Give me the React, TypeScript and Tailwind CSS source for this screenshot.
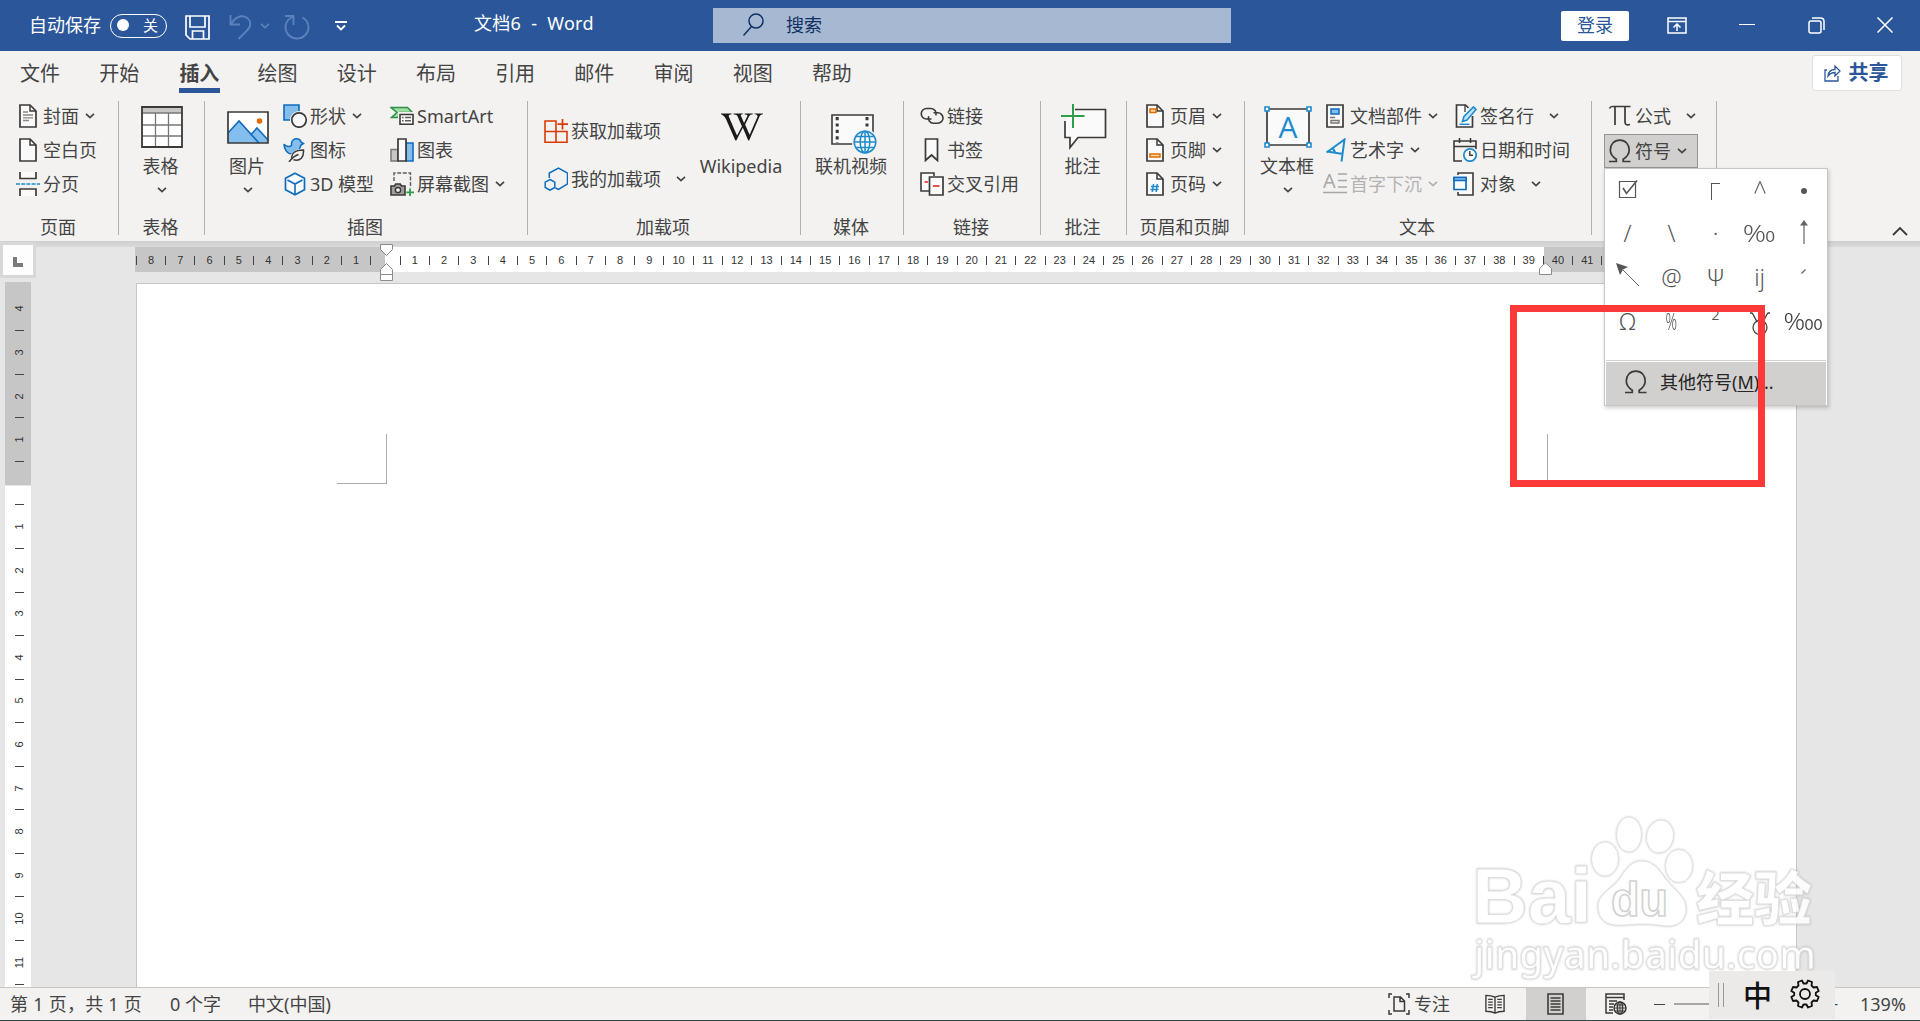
import React from "react";
import { FaWikipediaW } from "react-icons/fa";

const INK = "#3b3a39";
const BLUE = "#1e8bcd";

/* ---------- small building blocks ---------- */

function Chevron({ className = "" }: { className?: string }) {
  return (
    <svg width="10" height="6" viewBox="0 0 10 6" fill="none" stroke="currentColor" strokeWidth="1.7" className={`shrink-0 ${className}`}>
      <path d="M1 .8 5 4.6 9 .8" />
    </svg>
  );
}

function Svg({ children, w = 24, h = 24 }: { children: React.ReactNode; w?: number; h?: number }) {
  return (
    <svg width={w} height={h} viewBox={`0 0 ${w} ${h}`} fill="none" className="shrink-0">
      {children}
    </svg>
  );
}

function Row({ icon, label, chev, muted }: { icon: React.ReactNode; label: string; chev?: "near" | "far"; muted?: boolean }) {
  return (
    <div className={`flex h-[34px] items-center whitespace-nowrap ${muted ? "text-[#b3b1af]" : ""}`}>
      {icon}
      <span className="ml-[3px]">{label}</span>
      {chev && <Chevron className={chev === "near" ? "ml-[6px]" : "ml-[15px]"} />}
    </div>
  );
}

function Big({ icon, label, chev, className = "" }: { icon: React.ReactNode; label: string; chev?: boolean; className?: string }) {
  return (
    <div className={`flex flex-col items-center whitespace-nowrap ${className}`}>
      <div className="flex h-[54px] w-full items-center justify-center pt-0.5">{icon}</div>
      <div className="h-[26px] pr-0.5 leading-[26px]">{label}</div>
      <div className="flex h-[21px] items-center">{chev && <Chevron />}</div>
    </div>
  );
}

function Group({ label, className, children }: { label: string; className: string; children: React.ReactNode }) {
  return (
    <>
      <section className={`flex shrink-0 flex-col pt-1 ${className}`}>
        <div className="flex h-[102px]">{children}</div>
        <div className="mt-[14px] h-6 pr-0.5 text-center leading-6">{label}</div>
      </section>
      <div className="mt-1.5 h-[134px] w-px shrink-0 bg-[#b3b0ad]" />
    </>
  );
}

/* ---------- ribbon icons ---------- */

const Doc = ({ children, x = 4 }: { children?: React.ReactNode; x?: number }) => (
  <Svg>
    <path d={`M${x} 1h10l6 6v16h-16z`} fill="#fafafa" stroke={INK} strokeWidth="1.7" />
    <path d={`M${x + 10} 1v6h6`} stroke={INK} strokeWidth="1.5" />
    {children}
  </Svg>
);

const CoverIcon = () => (
  <Doc>
    <path d="M7 8h5M7 11h10M7 13.8h10M7 16.5h6" stroke="#8a8886" strokeWidth="1.3" />
  </Doc>
);
const BreakIcon = () => (
  <Svg>
    <path d="M4 0v6.5h16V0M4 24v-7h16v7" fill="#fafafa" stroke={INK} strokeWidth="1.7" />
    <path d="M0 12h24" stroke={BLUE} strokeWidth="1.5" strokeDasharray="4 1.2" />
  </Svg>
);
const TableIcon = () => (
  <Svg w={42} h={42}>
    <path d="M1 1h40v40H1z" fill="#fff" />
    <path d="M1 1h40v6H1z" fill="#c8c6c4" />
    <path d="M1 7h40M1 19h40M1 30h40M14.500 7v34M27.500 7v34" stroke="#797775" strokeWidth="1.3" />
    <path d="M1 1h40v40H1z" stroke={INK} strokeWidth="1.8" />
  </Svg>
);
const PictureIcon = () => (
  <Svg w={42} h={33}>
    <path d="M1 1h40v31H1z" fill="#fff" />
    <path d="M1 22 12 10l20 22H1z" fill="#83beec" />
    <path d="m24 23 6-6 11 11v4H32z" fill="#83beec" />
    <path d="M1 22 12 10l20 22M24.500 23l5.500-6 11 12" stroke="#0f6cbd" strokeWidth="1.6" />
    <circle cx="32.500" cy="10" r="2.800" fill="#e06c00" />
    <path d="M1 1h40v31H1z" stroke={INK} strokeWidth="1.7" />
  </Svg>
);
const ShapesIcon = () => (
  <Svg>
    <path d="M1 1h15v15H1z" fill="#83beec" stroke="#0f6cbd" strokeWidth="1.6" />
    <circle cx="16" cy="16" r="9" fill="#f3f2f1" />
    <circle cx="16" cy="16" r="7.200" fill="#fafafa" stroke={INK} strokeWidth="1.700" />
  </Svg>
);
const IconsIcon = () => (
  <Svg>
    <path d="M1 6c1 2 3 2.500 5 2.500 2 0 3-1 2.500-3C8.500 2.500 11 .8 13.500.8 16 .8 17.500 2 18 4l2.500 1.500L18 7c-1 4-4 9-9 9-5 0-8-5-8-10z" fill="#83beec" stroke="#0f6cbd" strokeWidth="1.500" />
    <path d="M5 24c1-8 6-13 17-14 1 8-3 15-11 13z" fill="#f3f2f1" />
    <path d="M9 21.500c-1.500-6 3-9.500 11.500-9.500.5 7-3 11.500-10 9.800M6 24c3-4 6-6.500 9.500-7.500" stroke={INK} strokeWidth="1.500" />
  </Svg>
);
const CubeIcon = () => (
  <Svg>
    <path d="m12 1.200 9.500 5v11.500l-9.500 5-9.500-5V6.200z" fill="#fafafa" stroke="#0f6cbd" strokeWidth="1.700" />
    <path d="m4.500 8 7.500 4 7.500-4M12 12v10" stroke="#0f6cbd" strokeWidth="1.600" />
  </Svg>
);
const SmartArtIcon = () => (
  <Svg>
    <path d="M1 3.500h16.500l5 5H10v5H1.500L7 8.500z" fill="#a1dda4" stroke="#2f8f46" strokeWidth="1.500" />
    <path d="M8 8h16v14H8z" fill="#f3f2f1" />
    <path d="M10 10.500h13v9.800H10z" fill="#fafafa" stroke={INK} strokeWidth="1.600" />
    <path d="M12 13.500h1.600M15 13.500h6M12 16.800h1.600M15 16.800h6" stroke="#605e5c" strokeWidth="1.400" />
  </Svg>
);
const ChartIcon = () => (
  <Svg>
    <path d="M1 11.500h7V23H1z" fill="#c8c6c4" stroke="#797775" strokeWidth="1.500" />
    <path d="M16 5h7v18h-7z" fill="#83beec" stroke="#0f6cbd" strokeWidth="1.600" />
    <path d="M8 1h8v22H8z" fill="#fafafa" stroke={INK} strokeWidth="1.700" />
  </Svg>
);
const ScreenshotIcon = () => (
  <Svg>
    <path d="M4 9V1h16.500v15" stroke="#605e5c" strokeWidth="1.400" strokeDasharray="4 1.600" />
    <path d="M1 14h3.500l1.200-2h4.600l1.200 2H15v9H1z" fill="#a19f9d" stroke={INK} strokeWidth="1.600" />
    <circle cx="8" cy="18" r="2.600" fill="#fafafa" stroke={INK} strokeWidth="1.500" />
    <path d="M20 16.500V24M16.300 20.300H24" stroke="#2f9e4c" strokeWidth="1.800" />
  </Svg>
);
const AddinsIcon = () => (
  <Svg>
    <path d="M1 2h11v10.500H1zM1 12.500h11V23.200H1zM12 12.500h11v10.700H12z" stroke="#d83b01" strokeWidth="1.600" />
    <path d="M18.500 0v10.500M13.500 5.200H24" stroke="#d83b01" strokeWidth="1.700" />
  </Svg>
);
const MyAddinsIcon = () => (
  <Svg>
    <path d="M5.300 11V6L14.500 1l9 5v11l-9 5.500-3-1.500" stroke="#0f6cbd" strokeWidth="1.500" />
    <path d="m6 12.500 4.800 2.700v5.300L6 23.200l-4.800-2.700v-5.300z" stroke="#0f6cbd" strokeWidth="1.500" />
  </Svg>
);
const VideoIcon = () => (
  <Svg w={46} h={40}>
    <path d="M1 1h41v29H1z" fill="#fafafa" stroke={INK} strokeWidth="1.600" />
    <path d="M6.200 3v26" stroke={INK} strokeWidth="3" strokeDasharray="3.200 3.200" />
    <path d="M36 3v12" stroke={INK} strokeWidth="3" strokeDasharray="3.200 3.200" />
    <circle cx="34" cy="28" r="13" fill="#f3f2f1" />
    <g stroke={BLUE} strokeWidth="1.500">
      <circle cx="34" cy="28" r="10.800" fill="#fafafa" />
      <ellipse cx="34" cy="28" rx="4.800" ry="10.800" />
      <path d="M34 17v22M23.200 28h21.600M25 22.500h18M25 33.500h18" />
    </g>
  </Svg>
);
const LinkIcon = () => (
  <Svg>
    <path d="M11.500 15H6.500a5.200 5.200 0 0 1 0-10.500h4.500a5.200 5.200 0 0 1 4.800 7" stroke={INK} strokeWidth="1.600" />
    <path d="M13.500 8.800H17.800a5.200 5.200 0 0 1 0 10.400H13.500a5.200 5.200 0 0 1-4.800-7" stroke={INK} strokeWidth="1.600" />
  </Svg>
);
const BookmarkIcon = () => (
  <Svg>
    <path d="M5.500 1h12v21.500l-6-5.500-6 5.500z" fill="#fafafa" stroke={INK} strokeWidth="1.700" />
  </Svg>
);
const CrossRefIcon = () => (
  <Svg>
    <path d="M9 19H1V1h13v3" fill="#fafafa" stroke={INK} strokeWidth="1.600" />
    <path d="M4.500 10H8" stroke="#e3342f" strokeWidth="1.600" />
    <path d="M9.500 5H23v18H9.500z" fill="#fafafa" stroke={INK} strokeWidth="1.700" />
    <path d="M13 14h6.500" stroke="#e3342f" strokeWidth="1.700" />
  </Svg>
);
const CommentIcon = () => (
  <Svg w={46} h={46}>
    <path d="M14 5.500h30.500v28H17L9 43.500V33.500H4V17" fill="#fafafa" stroke={INK} strokeWidth="1.700" />
    <path d="M12 0v24M0 12h23.500" stroke="#2f9e4c" strokeWidth="2" />
  </Svg>
);
const HeaderIcon = () => (
  <Doc>
    <path d="M7 5h6v3.500H7z" fill="#fbd9a5" stroke="#e06c00" strokeWidth="1.500" />
  </Doc>
);
const FooterIcon = () => (
  <Doc>
    <path d="M7 16h10v3H7z" fill="#fbd9a5" stroke="#e06c00" strokeWidth="1.500" />
  </Doc>
);
const PageNumIcon = () => (
  <Doc>
    <path d="m10.500 12-1.200 8M14.300 12l-1.200 8M8 14.500h8M7.500 17.500h8" stroke={BLUE} strokeWidth="1.500" />
  </Doc>
);
const TextBoxIcon = () => (
  <Svg w={48} h={42}>
    <path d="M3 3h42v36H3z" fill="#fafafa" stroke={INK} strokeWidth="1.700" />
    <g fill="#fff" stroke={BLUE} strokeWidth="1.600">
      <path d="M1 1h4v4H1zM43 1h4v4h-4zM1 37h4v4H1zM43 37h4v4h-4z" />
    </g>
    <text x="24" y="32" textAnchor="middle" fontSize="30" fontFamily="'Open Sans'" fill={BLUE}>A</text>
  </Svg>
);
const PartsIcon = () => (
  <Svg>
    <path d="M4 1h16v22H4z" fill="#fafafa" stroke={INK} strokeWidth="1.700" />
    <path d="M8 5h8v5H8z" fill="#83beec" stroke="#0f6cbd" strokeWidth="1.500" />
    <path d="M7 13.500h5M8 16.500h8v2.500H8z" stroke="#797775" strokeWidth="1.400" />
  </Svg>
);
const WordArtIcon = () => (
  <Svg>
    <path d="M3.500 14.500 21.500 1.500 18.500 23.500M4 13.500 20 16M10 10.500l2.500 4.500" stroke={BLUE} strokeWidth="2" />
  </Svg>
);
const DropCapIcon = () => (
  <Svg>
    <text x="0" y="16" fontSize="20" fontFamily="'Open Sans'" fill="#a8a6a4">A</text>
    <path d="M15 2h9M15 8.500h9M15 15h9M0 20.500h24" stroke="#a8a6a4" strokeWidth="1.500" />
  </Svg>
);
const SignIcon = () => (
  <Svg>
    <path d="M19.500 12v11h-16V1h9l3 3" fill="#fafafa" stroke={INK} strokeWidth="1.700" />
    <path d="M12 1v7" stroke={INK} strokeWidth="1.300" />
    <path d="m9.500 17.500 1.500-5L20.500 3l2.500 2.500L14 16z" fill="#c7e3f7" stroke={BLUE} strokeWidth="1.600" />
    <path d="M6.500 20.300h10" stroke={BLUE} strokeWidth="1.500" />
  </Svg>
);
const DateIcon = () => (
  <Svg>
    <path d="M9 23H1V3h22v8M1 8.500h22M6.500 0v5M17.500 0v5" stroke={INK} strokeWidth="1.600" />
    <circle cx="17" cy="17" r="6.200" fill="#fafafa" stroke={BLUE} strokeWidth="1.700" />
    <path d="M16.800 13v4.300H20" stroke={INK} strokeWidth="1.400" />
  </Svg>
);
const ObjectIcon = () => (
  <Svg>
    <path d="M5 3V1h15v22H5v-3" fill="#fafafa" stroke={INK} strokeWidth="1.600" />
    <path d="M1 5.500h12v12H1z" fill="#fafafa" stroke="#0f6cbd" strokeWidth="1.700" />
    <path d="M1 5.500h12v3H1z" fill="#83beec" stroke="#0f6cbd" strokeWidth="1.500" />
  </Svg>
);
const PiIcon = () => (
  <Svg>
    <path d="M1.500 4.500c.5-1.500 1.500-2 3-2h18M7 2.500v18.500M17 2.500V18c0 2.500 1.500 3.500 5 2.500" stroke={INK} strokeWidth="1.700" />
  </Svg>
);
const OmegaIcon = () => (
  <Svg>
    <path d="M1 22.500h7.300v-2.300C4 17.500 2.300 14.500 2.300 11 2.300 5.500 6 1.200 11.800 1.200s9.400 4.300 9.400 9.800c0 3.500-1.700 6.500-6 9.200v2.300h7.300" stroke={INK} strokeWidth="1.700" />
  </Svg>
);

/* ---------- page parts ---------- */

function TitleBar() {
  return (
    <header className="flex h-[51px] shrink-0 items-center bg-[#2b579a] text-[18px] text-white">
      <div className="flex w-[444px] shrink-0 items-center pl-[29px]">
        <span className="w-[81px] whitespace-nowrap">自动保存</span>
        <span className="flex h-6 w-[57px] items-center justify-between rounded-full border border-white pr-2 pb-px pl-1.5">
          <i className="h-3 w-3 rounded-full bg-white" />
          <b className="text-[15px] leading-none font-normal">关</b>
        </span>
        <svg width="25" height="25" viewBox="0 0 25 25" fill="none" stroke="#fff" strokeWidth="1.700" className="mt-[3px] ml-[18px]">
          <path d="M1 1h23v23H5l-4-4zM5 1v11h15V1M7.500 24v-8h11v8" />
        </svg>
        <svg width="24" height="26" viewBox="0 0 24 26" fill="none" stroke="#5b82bd" strokeWidth="1.800" className="mt-[3px] ml-[19px]">
          <path d="M1.500 1v9.500H11M2 10C6 3 12 1 16.500 3c6 3 6 9 2 13L9.500 25" />
        </svg>
        <Chevron className="ml-[7px] text-[#5b82bd]" />
        <svg width="26" height="26" viewBox="0 0 26 26" fill="none" stroke="#5b82bd" strokeWidth="1.800" className="mt-[3px] ml-[14px]">
          <path d="M1 2h8.500v9M9 3C3 5 1.500 9 1.500 13.500c0 6 5 11 11.500 11s11.500-5 11.500-11c0-4.500-2.500-8-6-10" />
        </svg>
        <svg width="12" height="10" viewBox="0 0 12 10" fill="none" stroke="#fff" strokeWidth="1.800" className="ml-[25px]">
          <path d="M0 1h12M2 4.500l4 4 4-4" />
        </svg>
      </div>
      <div className="w-[269px] pb-1 pl-[30px] whitespace-pre tracking-[.3px]">文档6  -  Word</div>
      <div className="flex h-[35px] w-[518px] items-center bg-[#a6b8d2] pl-[30px] text-[#10305f]">
        <svg width="21" height="23" viewBox="0 0 21 23" fill="none" stroke="#10305f" strokeWidth="1.500" className="-mt-0.5">
          <circle cx="13" cy="8" r="7" />
          <path d="m8.500 13.500-8 9" />
        </svg>
        <span className="ml-[22px]">搜索</span>
      </div>
      <div className="ml-[330px] flex h-[30px] w-[68px] items-center justify-center rounded-[2px] bg-white text-[#2b579a]">登录</div>
      <svg width="20" height="17" viewBox="0 0 20 17" fill="none" stroke="#fff" strokeWidth="1.500" className="ml-[38px]">
        <path d="M1 1h18v15H1zM1 4.500h18M10 14V7.500M6.500 10.500 10 7l3.500 3.500" />
      </svg>
      <i className="-mt-0.5 ml-[52px] h-[1.500px] w-4 bg-white" />
      <svg width="17" height="17" viewBox="0 0 17 17" fill="none" stroke="#fff" strokeWidth="1.500" className="ml-[53px]">
        <rect x="1" y="4" width="12" height="12" rx="2" />
        <path d="M4 1h8.500C15 1 16 2 16 4.500V13" />
      </svg>
      <svg width="16" height="16" viewBox="0 0 16 16" fill="none" stroke="#fff" strokeWidth="1.500" className="-mt-0.5 ml-[52px]">
        <path d="m.5.5 15 15m0-15-15 15" />
      </svg>
    </header>
  );
}

const TABS = ["文件", "开始", "插入", "绘图", "设计", "布局", "引用", "邮件", "审阅", "视图", "帮助"];

function TabBar() {
  return (
    <nav className="flex h-11 shrink-0 items-start pl-5 text-[20px] text-[#444]">
      {TABS.map((t) => (
        <div key={t} className="w-[79.200px] shrink-0">
          <div className={`w-[41px] pt-[9px] leading-7 ${t === "插入" ? "ml-px border-b-[5px] border-[#2b579a] font-bold" : ""}`}>{t}</div>
        </div>
      ))}
      <div className="mt-1 mr-[18px] ml-auto flex h-9 w-[90px] items-center justify-center gap-2 rounded-[3px] border border-[#e1dfdd] bg-white pr-0.5 font-bold text-[#2b579a]">
        <svg width="17" height="18" viewBox="0 0 17 18" fill="none" stroke="#2b579a" strokeWidth="1.300">
          <path d="M3 6H1v11h13v-5M4 12c.5-4 3-6.500 7-6.500V2l5 5-5 5V8.500C8 8.500 6 9.500 4 12z" />
        </svg>
        共享
      </div>
    </nav>
  );
}

function Ribbon() {
  return (
    <div className="flex h-[146px] shrink-0 items-start text-[18px] text-[#444]">
      <Group label="页面" className="w-[118px]">
        <div className="ml-4">
          <Row icon={<CoverIcon />} label="封面" chev="near" />
          <Row icon={<Doc />} label="空白页" />
          <Row icon={<BreakIcon />} label="分页" />
        </div>
      </Group>
      <Group label="表格" className="w-[85px]">
        <Big icon={<TableIcon />} label="表格" chev className="w-full" />
      </Group>
      <Group label="插图" className="w-[322px]">
        <Big icon={<PictureIcon />} label="图片" chev className="ml-[13px] w-[60px]" />
        <div className="ml-[5px] w-[107px]">
          <Row icon={<ShapesIcon />} label="形状" chev="near" />
          <Row icon={<IconsIcon />} label="图标" />
          <Row icon={<CubeIcon />} label="3D 模型" />
        </div>
        <div>
          <Row icon={<SmartArtIcon />} label="SmartArt" />
          <Row icon={<ChartIcon />} label="图表" />
          <Row icon={<ScreenshotIcon />} label="屏幕截图" chev="near" />
        </div>
      </Group>
      <Group label="加载项" className="w-[272px]">
        <div className="ml-4 flex w-[148px] flex-col gap-[14px] pt-[15px]">
          <Row icon={<AddinsIcon />} label="获取加载项" />
          <Row icon={<MyAddinsIcon />} label="我的加载项" chev="far" />
        </div>
        <Big icon={<FaWikipediaW size={42} color="#1b1b1b" />} label="Wikipedia" className="ml-[6px] w-[88px]" />
      </Group>
      <Group label="媒体" className="w-[102px]">
        <Big icon={<div className="pt-[13px] pl-1"><VideoIcon /></div>} label="联机视频" className="w-full" />
      </Group>
      <Group label="链接" className="w-[136px]">
        <div className="ml-4">
          <Row icon={<LinkIcon />} label="链接" />
          <Row icon={<BookmarkIcon />} label="书签" />
          <Row icon={<CrossRefIcon />} label="交叉引用" />
        </div>
      </Group>
      <Group label="批注" className="w-[85px]">
        <Big icon={<CommentIcon />} label="批注" className="w-full" />
      </Group>
      <Group label="页眉和页脚" className="w-[117px]">
        <div className="ml-4">
          <Row icon={<HeaderIcon />} label="页眉" chev="near" />
          <Row icon={<FooterIcon />} label="页脚" chev="near" />
          <Row icon={<PageNumIcon />} label="页码" chev="near" />
        </div>
      </Group>
      <Group label="文本" className="w-[346px]">
        <Big icon={<TextBoxIcon />} label="文本框" chev className="ml-[13px] w-[60px]" />
        <div className="ml-[5px] w-[130px]">
          <Row icon={<PartsIcon />} label="文档部件" chev="near" />
          <Row icon={<WordArtIcon />} label="艺术字" chev="near" />
          <Row icon={<DropCapIcon />} label="首字下沉" chev="near" muted />
        </div>
        <div>
          <Row icon={<SignIcon />} label="签名行" chev="far" />
          <Row icon={<DateIcon />} label="日期和时间" />
          <Row icon={<ObjectIcon />} label="对象" chev="far" />
        </div>
      </Group>
      <Group label="" className="w-[124px]">
        <div className="ml-3 w-[94px]">
          <div className="pl-1">
            <Row icon={<PiIcon />} label="公式" chev="far" />
          </div>
          <div className="mt-px flex h-[34px] items-center border border-[#979593] bg-[#d2d0ce] pl-[3px]">
            <Row icon={<OmegaIcon />} label="符号" chev="near" />
          </div>
        </div>
      </Group>
      <svg width="16" height="10" viewBox="0 0 16 10" fill="none" stroke={INK} strokeWidth="1.800" className="mt-[131px] mr-3 ml-auto">
        <path d="m1 9 7-7 7 7" />
      </svg>
    </div>
  );
}

/* Alternating tick / number cells, half a unit apart. */
const halfSteps = (from: number, to: number) => Array.from({ length: (to - from) * 2 + 1 }, (_, i) => from + i / 2);

function HorizontalRuler() {
  return (
    <div className="ml-[135px] grid h-[25px] w-[1662px] overflow-hidden">
      <div className="col-start-1 row-start-1 flex">
        <div className="w-[250px] bg-[#c6c6c6]" />
        <div className="w-[1159px] bg-white" />
        <div className="flex-1 bg-[#c6c6c6]" />
      </div>
      <div className="col-start-1 row-start-1 -ml-[6px] flex items-center pt-0.5 font-['Liberation_Sans'] text-[11px] text-[#333]">
        {halfSteps(-8.5, 41.5).map((v) => (
          <div key={v} className="flex w-[14.660px] shrink-0 justify-center">
            {v === 0 ? null : Number.isInteger(v) ? Math.abs(v) : <i className="h-[9px] w-px bg-[#444]" />}
          </div>
        ))}
      </div>
    </div>
  );
}

function VerticalRuler() {
  return (
    <div className="ml-[5px] grid w-[26px] overflow-hidden">
      <div className="col-start-1 row-start-1 flex flex-col">
        <div className="h-[204px] border-b border-[#e6e6e6] bg-[#c6c6c6]" />
        <div className="flex-1 bg-white" />
      </div>
      <div className="col-start-1 row-start-1 mt-[16px] flex flex-col items-center pl-[3px] font-['Liberation_Sans'] text-[11px] text-[#333]">
        {halfSteps(-4, 11.5).map((v) => (
          <div key={v} className="flex h-[21.790px] shrink-0 items-center justify-center">
            {v === 0 ? null : Number.isInteger(v) ? <span className="block -rotate-90 leading-none">{Math.abs(v)}</span> : <i className="h-px w-[9px] bg-[#444]" />}
          </div>
        ))}
      </div>
    </div>
  );
}

function Workspace() {
  return (
    <main className="flex h-[746px] shrink-0 flex-col overflow-hidden bg-[#e6e6e6]">
      <div className="h-1.5 shrink-0 bg-linear-to-b from-[#cfcfcf] to-[#dadada]" />
      <div className="h-[35px] shrink-0">
        <HorizontalRuler />
      </div>
      <div className="flex min-h-0 flex-1">
        <VerticalRuler />
        <div className="mt-px ml-[105px] w-[1661px] border border-b-0 border-[#c6c6c6] bg-white">
          <div className="mt-[150px] ml-[200px] flex justify-between pr-[199px]">
            <div className="h-[50px] w-[50px] border-r border-b border-[#ababab]" />
            <div className="h-[50px] w-[50px] border-b border-l border-[#ababab]" />
          </div>
        </div>
      </div>
    </main>
  );
}

function TabSelector() {
  return (
    <div className="absolute top-[242px] left-0 flex h-9 w-9 items-center justify-center border-[3px] border-[#d8d8d8] bg-[#fdfdfd] pt-1">
      <i className="h-[10px] w-[10px] border-b-4 border-l-4 border-[#7a7a7a]" />
    </div>
  );
}

function RulerMarkers() {
  return (
    <>
      <svg width="14" height="38" viewBox="0 0 14 38" fill="#fdfdfd" stroke="#8a8a8a" className="absolute top-[244px] left-[380px]">
        <path d="M.5.5h12v5l-6 6-6-6zM6.500 19.500l6 6v5H.5v-5zM.5 30.500h12v6H.5z" />
      </svg>
      <svg width="14" height="14" viewBox="0 0 14 14" fill="#fdfdfd" stroke="#8a8a8a" className="absolute top-[262px] left-[1539px]">
        <path d="m6.500.8 6 5.700v6H.5v-6z" />
      </svg>
    </>
  );
}

function StatusBar() {
  return (
    <footer className="flex h-[34px] shrink-0 items-center border-t border-b border-t-[#c6c6c6] border-b-[#2c4a48] bg-[#f3f2f1] text-[18px] whitespace-nowrap text-[#444]">
      <span className="w-[160px] pl-[10px] tracking-[.25px]">第 1 页，共 1 页</span>
      <span className="w-[78px] pl-[10px]">0 个字</span>
      <span className="w-[1150px] pl-[10px]">中文(中国)</span>
      <svg width="22" height="22" viewBox="0 0 22 22" fill="none" stroke={INK} strokeWidth="1.500" className="shrink-0">
        <path d="M4 1H1v4M1 17v4h3M18 1h3v4M21 17v4h-3M6 4h6.500l4 4v10H6zM12 4v4.500h4.500" />
      </svg>
      <span className="ml-1 w-[37px]">专注</span>
      <svg width="20" height="20" viewBox="0 0 22 22" fill="none" stroke={INK} strokeWidth="1.500" className="ml-[34px] shrink-0">
        <path d="M11 3.500C8 2 5 1.500 1 1.500V19c4 0 7 .3 10 2 3-1.700 6-2 10-2V1.500C17 1.500 14 2 11 3.500zM11 4v17" />
        <path d="M3.500 6h5M3.500 9h5M3.500 12h5M3.500 15h5M13.500 6h5M13.500 9h5M13.500 12h5M13.500 15h5" strokeWidth="1.300" />
      </svg>
      <span className="ml-[21px] flex h-8 w-[60px] shrink-0 items-center justify-center bg-[#d2d0ce] pr-0.5">
        <svg width="17" height="22" viewBox="0 0 17 22" fill="none" stroke={INK} strokeWidth="1.600">
          <path d="M1 1h15v20H1z" />
          <path d="M3.500 5h10M3.500 8h10M3.500 11h10M3.500 14h10M3.500 17h10" strokeWidth="1.400" />
        </svg>
      </span>
      <svg width="22" height="22" viewBox="0 0 22 22" fill="none" stroke={INK} strokeWidth="1.500" className="ml-[19px] shrink-0">
        <path d="M8 20H1V1h18v6M1 4.500h18M4 8h8M4 11h5M4 14h4M4 17h4" />
        <circle cx="15" cy="15" r="6" />
        <ellipse cx="15" cy="15" rx="2.600" ry="6" />
        <path d="M9 15h12M10 12h10M10 18h10M15 9v12" strokeWidth="1.100" />
      </svg>
      <i className="ml-[27px] h-px w-[11px] shrink-0 bg-[#444]" />
      <i className="ml-[9px] h-[1.500px] w-[153px] shrink-0 bg-[#a6a6a6]" />
      <span className="-ml-[1px] w-[34px] shrink-0 text-[22px] leading-none font-light">+</span>
      <span>139%</span>
    </footer>
  );
}

const SYMBOLS = ["☑", "", "Γ", "^", "•", "/", "\\", "·", "‰", "↑", "↖", "@", "Ψ", "ĳ", "ˊ", "Ω", "%", "²", "♉", "‱"];

function Symbol({ s }: { s: string }) {
  if (s === "☑")
    return (
      <svg width="20" height="20" viewBox="0 0 20 20" fill="none" stroke="#555" strokeWidth="1.200">
        <path d="M1.500 2.500h16v16h-16z" />
        <path d="m5 9 3.500 5.500L19 1.500" strokeWidth="1.600" />
      </svg>
    );
  if (s === "Γ") return <i className="mt-1 h-[17px] w-[9px] border-t border-l border-[#555]" />;
  if (s === "^")
    return (
      <svg width="12" height="13" viewBox="0 0 12 13" fill="none" stroke="#666" strokeWidth="1.200" className="mb-1">
        <path d="m.8 12.500 5.200-12 5.200 12" />
      </svg>
    );
  if (s === "•") return <i className="mt-1 h-[6px] w-[6px] rounded-full bg-[#555]" />;
  if (s === "↑")
    return (
      <svg width="10" height="24" viewBox="0 0 10 24" fill="#666" className="-mt-0.5">
        <path d="M5 0 9 5.500H5.600V24H4.400V5.500H1z" />
      </svg>
    );
  if (s === "↖")
    return (
      <svg width="24" height="24" viewBox="0 0 24 24" fill="#555" className="-mt-1">
        <path d="M0 0 12 4 7 6.500 4 12z" />
        <path d="m5 5 18 18" stroke="#666" strokeWidth="1" />
      </svg>
    );
  if (s === "♉")
    return (
      <svg width="20" height="23" viewBox="0 0 20 23" fill="none" stroke="#444" strokeWidth="1.300" className="mt-1">
        <path d="M0 1h2c2 2 3 6 5 8.500M20 1h-2c-2 2-3 6-5 8.500" />
        <circle cx="10" cy="15.500" r="7" />
      </svg>
    );
  if (s === "ˊ")
    return (
      <svg width="5" height="5" viewBox="0 0 5 5" stroke="#666" strokeWidth="1.300" className="mb-3">
        <path d="M.5 4.500 4.500.5" />
      </svg>
    );
  if (s === "%") return <span className="scale-x-[.62]">%</span>;
  if (s === "‱") return <span className="scale-x-[1.150] text-[#444]">‱</span>;
  if (s === "‰") return <span className="scale-x-[1.250]">‰</span>;
  return <span>{s}</span>;
}

function SymbolMenu() {
  return (
    <div className="absolute top-[168px] left-[1604px] flex h-[238px] w-[224px] flex-col border border-[#c8c6c4] bg-white shadow-[1px_2px_4px_rgba(0,0,0,.2)]">
      <div className="ml-px grid h-[189px] grid-cols-[repeat(5,44px)] grid-rows-[repeat(4,44px)] text-[23px] leading-none font-light text-[#555]">
        {SYMBOLS.map((s, i) => (
          <div key={i} className="flex items-center justify-center pr-px pb-1">
            <Symbol s={s} />
          </div>
        ))}
      </div>
      <div className="mx-px mt-[2px] h-px bg-[#d2d0ce]" />
      <div className="mx-px mt-px flex h-[43px] items-center bg-[#d2d0ce] pb-[3px] pl-[18px] text-[18px] text-[#262626]">
        <OmegaIcon />
        <span className="ml-[12px] whitespace-nowrap">
          其他符号(<u className="underline-offset-2">M</u>)...
        </span>
      </div>
    </div>
  );
}

function ImeBar() {
  return (
    <div className="absolute top-[971px] left-[1709px] flex h-12 w-[126px] items-center bg-[#ebeae9]">
      <i className="ml-[9px] h-6 w-1.5 border-r border-l border-[#999]" />
      <span className="mt-px ml-[19px] text-[29px] leading-none font-medium text-[#111]">中</span>
      <svg width="30" height="30" viewBox="0 0 30 30" fill="none" stroke="#111" strokeWidth="1.800" className="-mt-0.5 ml-[18px]">
        <circle cx="15" cy="15" r="5" />
        <path strokeLinejoin="round" d="M12 1.500 13.500 4.500h3L18 1.500l4 1.500-.5 3.500 2 2L27 8l1.700 4-2.900 1.800v2.400L28.700 18 27 22l-3.500-.5-2 2L22 27l-4 1.500-1.500-3h-3L12 28.500 8 27l.5-3.500-2-2L3 22l-1.700-4 2.900-1.800v-2.400L1.300 12 3 8l3.500.5 2-2L8 3z" />
      </svg>
    </div>
  );
}

function Watermark() {
  return (
    <svg width="370" height="190" viewBox="0 0 370 190" className="absolute top-[802px] left-[1460px]">
      <defs>
        <filter id="soft" x="-5%" y="-5%" width="110%" height="110%">
          <feDropShadow dx="0" dy="0" stdDeviation="1" floodColor="#888" floodOpacity=".6" />
        </filter>
      </defs>
      <g fill="#fff" stroke="#d6d6d6" strokeWidth=".8" filter="url(#soft)" opacity=".85">
        <text x="12" y="121" fontSize="77" fontWeight="700" fontFamily="'Liberation Sans'" textLength="120" lengthAdjust="spacingAndGlyphs">Bai</text>
        <ellipse cx="145" cy="57" rx="13.500" ry="17" />
        <ellipse cx="169" cy="32.500" rx="12.500" ry="17.500" />
        <ellipse cx="200" cy="34.500" rx="13.500" ry="16.500" transform="rotate(10 200 34.500)" />
        <ellipse cx="219" cy="64" rx="13.500" ry="16.500" />
        <path d="M181 59c15 0 20 13 28 22s17 15 17 26c0 12-9 18-20 17-10-1-15-2-25-2s-17 2-26 1c-11-1-17-8-17-19 0-9 8-14 18-23 8-8 12-22 25-22z" />
        <text x="236" y="118" fontSize="58" fontWeight="900" fontFamily="'Noto Sans CJK SC'" textLength="116" lengthAdjust="spacingAndGlyphs">经验</text>
        <text x="14" y="167" fontSize="40" fontFamily="'Noto Sans'" fontWeight="500" textLength="342" lengthAdjust="spacingAndGlyphs">jingyan.baidu.com</text>
      </g>
      <text x="151" y="114" fontSize="49" fontWeight="700" fontFamily="'Liberation Sans'" fill="#fff" stroke="#d2d2d2" strokeWidth="1.700" textLength="57" lengthAdjust="spacingAndGlyphs">du</text>
    </svg>
  );
}

export default function App() {
  return (
    <div className="relative flex h-[1021px] w-[1920px] flex-col overflow-hidden bg-[#f3f2f1] font-['Noto_Sans','Noto_Sans_CJK_SC',sans-serif]">
      <TitleBar />
      <TabBar />
      <Ribbon />
      <Workspace />
      <StatusBar />
      <TabSelector />
      <RulerMarkers />
      <SymbolMenu />
      <div className="absolute top-[305px] left-[1510px] h-[182px] w-[255px] border-[7px] border-[#fc3939]" />
      <Watermark />
      <ImeBar />
    </div>
  );
}
